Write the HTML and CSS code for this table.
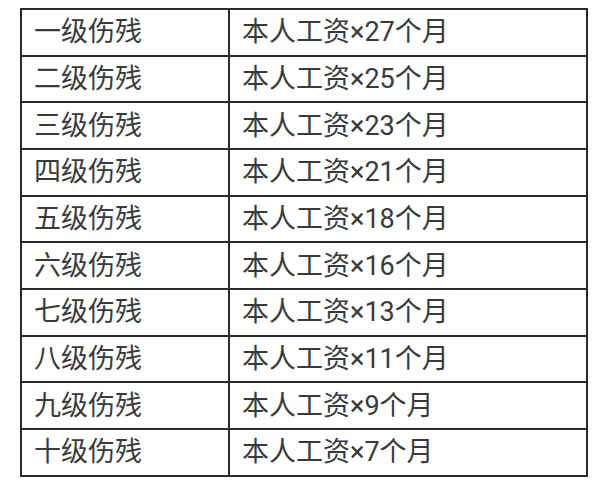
FILE: index.html
```html
<!DOCTYPE html>
<html lang="zh">
<head>
<meta charset="utf-8">
<link rel="stylesheet" href="styles.css">
</head>
<body>
<table class="grade-table">
  <tbody>
    <tr><td class="grade">一级伤残</td><td class="pay">本人工资×27个月</td></tr>
    <tr><td class="grade">二级伤残</td><td class="pay">本人工资×25个月</td></tr>
    <tr><td class="grade">三级伤残</td><td class="pay">本人工资×23个月</td></tr>
    <tr><td class="grade">四级伤残</td><td class="pay">本人工资×21个月</td></tr>
    <tr><td class="grade">五级伤残</td><td class="pay">本人工资×18个月</td></tr>
    <tr><td class="grade">六级伤残</td><td class="pay">本人工资×16个月</td></tr>
    <tr><td class="grade">七级伤残</td><td class="pay">本人工资×13个月</td></tr>
    <tr><td class="grade">八级伤残</td><td class="pay">本人工资×11个月</td></tr>
    <tr><td class="grade">九级伤残</td><td class="pay">本人工资×9个月</td></tr>
    <tr><td class="grade">十级伤残</td><td class="pay">本人工资×7个月</td></tr>
  </tbody>
</table>
</body>
</html>
```

FILE: styles.css
```css
html, body {
  margin: 0;
  padding: 0;
  background: #ffffff;
}

body {
  font-family: Roboto, "Noto Sans CJK SC", sans-serif;
  color: #3a3a3a;
}

.grade-table {
  margin: 8px 0 0 20px;
  width: 568px;
  border-collapse: collapse;
  table-layout: fixed;
}

.grade-table td {
  border: 2px solid #2a2a2a;
  height: 44.67px;
  padding: 0 0 0 12px;
  font-size: 27px;
  line-height: 30px;
  vertical-align: middle;
  white-space: nowrap;
}

.grade-table .grade {
  width: 194px;
}
```
